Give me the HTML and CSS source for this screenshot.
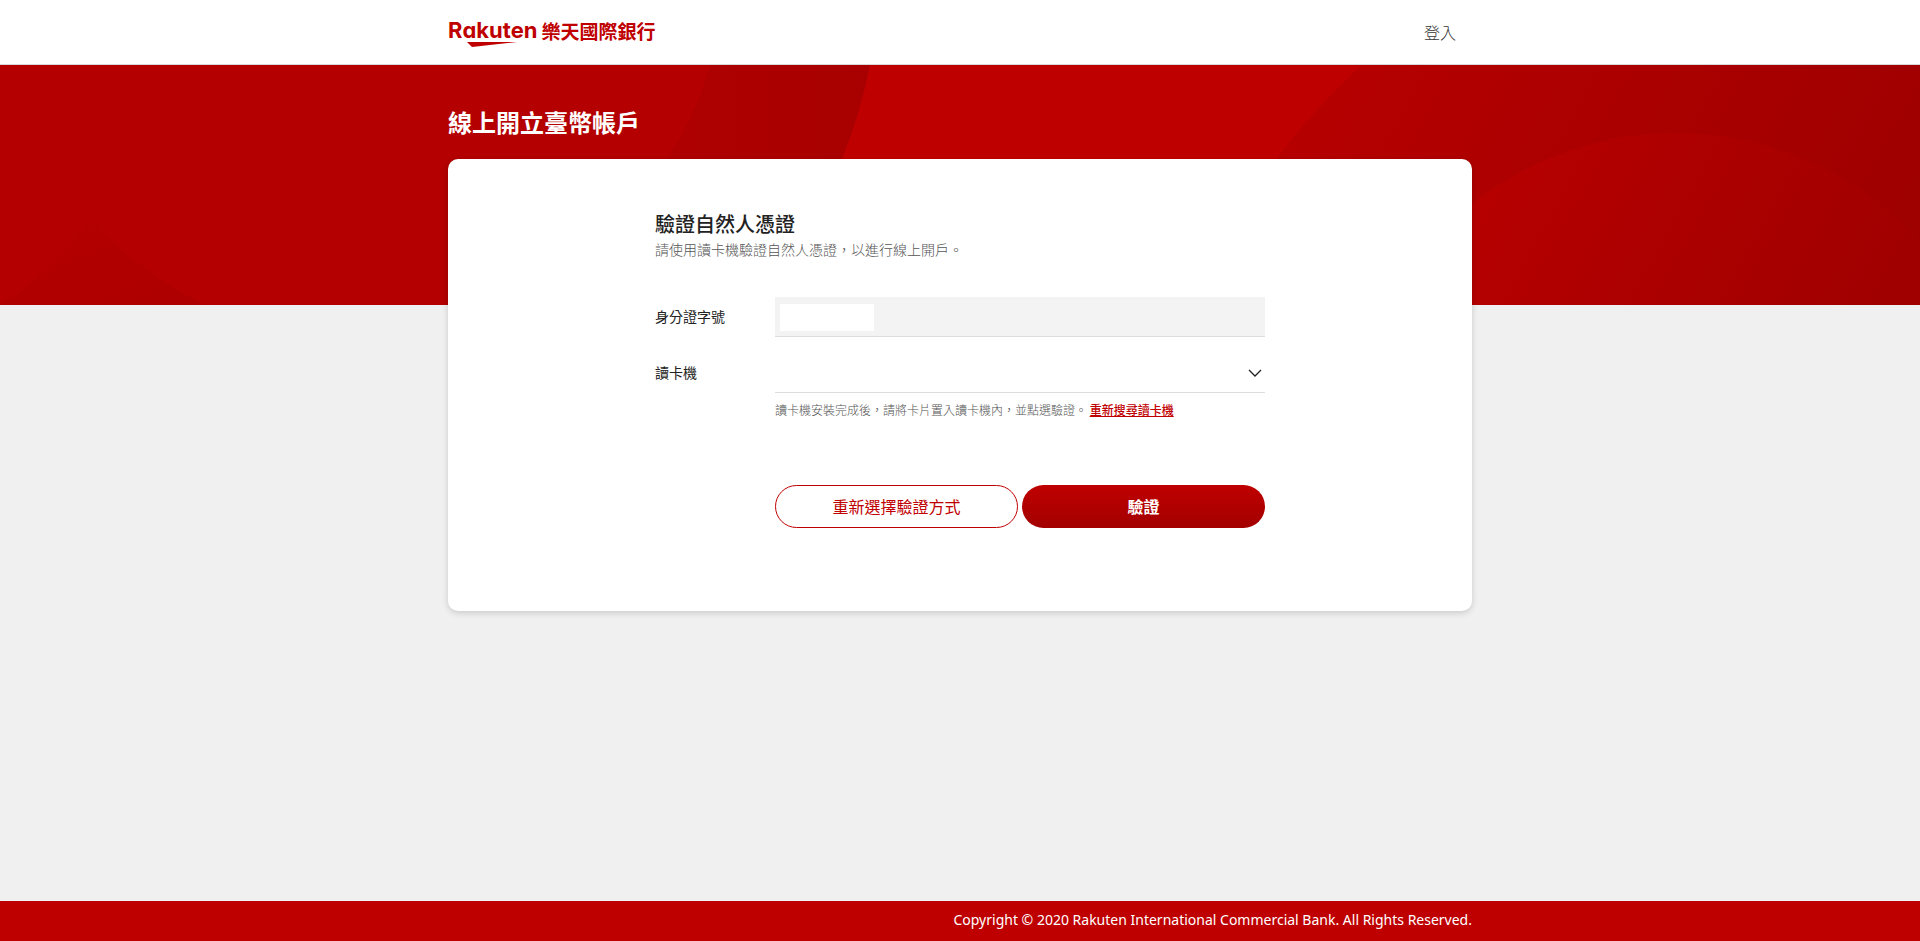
FILE: index.html
```html
<!DOCTYPE html>
<html lang="zh-Hant">
<head>
<meta charset="utf-8">
<meta name="viewport" content="width=device-width, initial-scale=1">
<title>樂天國際銀行</title>
<link rel="stylesheet" href="styles.css">
</head>
<body>
<header class="header">
  <div class="container header-inner">
    <a class="logo" href="#">
      <span class="logo-latin">R<span class="logo-alt">a</span>kuten
        <svg class="logo-swoosh" viewBox="0 0 50 5" aria-hidden="true"><path d="M0 0H50L5 5Z" fill="#bf0000"/></svg>
      </span>
      <span class="logo-cjk">樂天國際銀行</span>
    </a>
    <a class="login" href="#">登入</a>
  </div>
</header>
<main class="main">
  <svg class="hero" viewBox="0 0 1920 240" preserveAspectRatio="xMidYMid slice" aria-hidden="true">
    <defs>
      <linearGradient id="band" x1="0" y1="0" x2="1" y2="0"><stop offset="0" stop-color="#b00000"/><stop offset="1" stop-color="#a80000"/></linearGradient>
      <linearGradient id="right" gradientUnits="userSpaceOnUse" x1="1320" y1="0" x2="1860" y2="300"><stop offset="0" stop-color="#b60000"/><stop offset="1" stop-color="#9e0000"/></linearGradient>
      <linearGradient id="disc" gradientUnits="userSpaceOnUse" x1="1500" y1="100" x2="1860" y2="300"><stop offset="0" stop-color="#b60000"/><stop offset="1" stop-color="#a00000"/></linearGradient>
      <linearGradient id="hill" x1="0" y1="0" x2="1" y2="1"><stop offset="0" stop-color="#b40000"/><stop offset="1" stop-color="#ae0000"/></linearGradient>
    </defs>
    <rect width="1920" height="240" fill="#b40000"/>
    <path d="M90 154Q140 208 205 240H0Q60 200 90 154Z" fill="url(#hill)"/>
    <path d="M710 0H870Q860 50 842 94L780 240H620L667 94Q696 50 710 0Z" fill="url(#band)"/>
    <path d="M870 0H1362Q1308 50 1277 94L1200 240H780L842 94Q860 50 870 0Z" fill="#bf0000"/>
    <path d="M1362 0H1920V240H1200L1277 94Q1308 50 1362 0Z" fill="url(#right)"/>
    <circle cx="1676" cy="398" r="330" fill="url(#disc)"/>
  </svg>
  <div class="container content">
    <h1 class="page-title">線上開立臺幣帳戶</h1>
    <form class="card">
      <h2 class="card-title">驗證自然人憑證</h2>
      <p class="card-text">請使用讀卡機驗證自然人憑證，以進行線上開戶。</p>
      <div class="fields">
        <label class="label" for="id-number">身分證字號</label>
        <div class="id-field">
          <input class="control id-input" id="id-number" type="text" readonly>
          <span class="mask"></span>
        </div>
        <label class="label" for="reader">讀卡機</label>
        <div class="select-field">
          <select class="control" id="reader"><option></option></select>
          <svg class="chevron" viewBox="0 0 14 8" aria-hidden="true"><path d="M1 1L7 7L13 1" fill="none" stroke="#222" stroke-width="1.3"/></svg>
        </div>
        <p class="hint">讀卡機安裝完成後，請將卡片置入讀卡機內，並點選驗證。 <a class="hint-link" href="#">重新搜尋讀卡機</a></p>
        <div class="actions">
          <button class="button button-outline" type="button">重新選擇驗證方式</button>
          <button class="button button-solid" type="submit">驗證</button>
        </div>
      </div>
    </form>
  </div>
</main>
<footer class="footer">
  <p class="container copyright">Copyright © 2020 Rakuten International Commercial Bank. All Rights Reserved.</p>
</footer>
</body>
</html>
```
FILE: styles.css
```css
* { box-sizing: border-box; }
body {
  margin: 0;
  min-height: 100vh;
  display: flex;
  flex-direction: column;
  background: #f0f0f0;
  color: #222;
  font-family: "Noto Sans CJK TC", sans-serif;
  font-size: 14px;
}
h1, h2, p { margin: 0; }
a { color: inherit; text-decoration: none; }
.container { width: 100%; max-width: 1024px; margin: 0 auto; }

.header { background: #fff; border-bottom: 1px solid #d8d8d8; }
.header-inner {
  height: 64px;
  display: flex;
  align-items: center;
  justify-content: space-between;
  padding-right: 16px;
}
.logo { display: flex; align-items: center; gap: 4px; color: #bf0000; font-weight: 700; }
.logo-latin { position: relative; padding-bottom: 4px; font-family: Inter, sans-serif; font-size: 22px; line-height: 32px; }
.logo-alt { font-feature-settings: "cv11"; }
.logo-swoosh { position: absolute; left: 19px; bottom: 3px; width: 50px; height: 5px; }
.logo-cjk { font-size: 19px; line-height: 32px; padding-bottom: 2px; }
.login { font-size: 16px; line-height: 24px; font-weight: 300; color: #333; }

.main { position: relative; flex: 1; }
.hero { position: absolute; top: 0; left: 0; width: 100%; height: 240px; }
.content { position: relative; padding: 40px 0; }
.page-title { color: #fff; font-size: 24px; line-height: 34px; font-weight: 700; margin-bottom: 20px; }
.card {
  background: #fff;
  border-radius: 10px;
  padding: 52px 207px 83px 207px;
  box-shadow: 0 2px 6px rgba(0, 0, 0, .16);
}
.card-title { font-size: 20px; line-height: 26px; font-weight: 500; }
.card-text { font-size: 14px; line-height: 24px; font-weight: 300; color: #555; }
.fields { display: grid; grid-template-columns: 120px 1fr; margin-top: 36px; }
.label { line-height: 38px; }
.id-field, .select-field { position: relative; margin-bottom: 16px; }
.control {
  display: block;
  width: 100%;
  height: 40px;
  padding: 0 8px;
  border: 0;
  border-bottom: 1px solid #ddd;
  border-radius: 0;
  background: #fff;
  font: inherit;
  appearance: none;
}
.id-input { background: #f3f3f3; }
.mask { position: absolute; left: 5px; top: 7px; width: 94px; height: 27px; background: #fff; }
.select-field { margin-bottom: 8px; }
.chevron { position: absolute; right: 3px; top: 16px; width: 14px; height: 8px; pointer-events: none; }
.hint, .actions { grid-column: 2; }
.hint { font-size: 12px; line-height: 18px; font-weight: 300; color: #555; }
.hint-link { color: #bf0000; font-weight: 500; text-decoration: underline; }
.actions { display: grid; grid-template-columns: 1fr 1fr; gap: 4px; margin-top: 66px; }
.button {
  height: 43px;
  padding: 0 16px 2px;
  border: 1px solid #bf0000;
  border-radius: 22px;
  font: inherit;
  font-size: 16px;
}
.button-outline { background: #fff; color: #bf0000; }
.button-solid { border: 0; background: linear-gradient(#bf0000, #a30000); color: #fff; font-weight: 700; }

.footer { background: #bf0000; color: #fff; }
.copyright { font-family: "Noto Sans", sans-serif; font-size: 14px; line-height: 38px; padding-bottom: 2px; text-align: right; }
```
